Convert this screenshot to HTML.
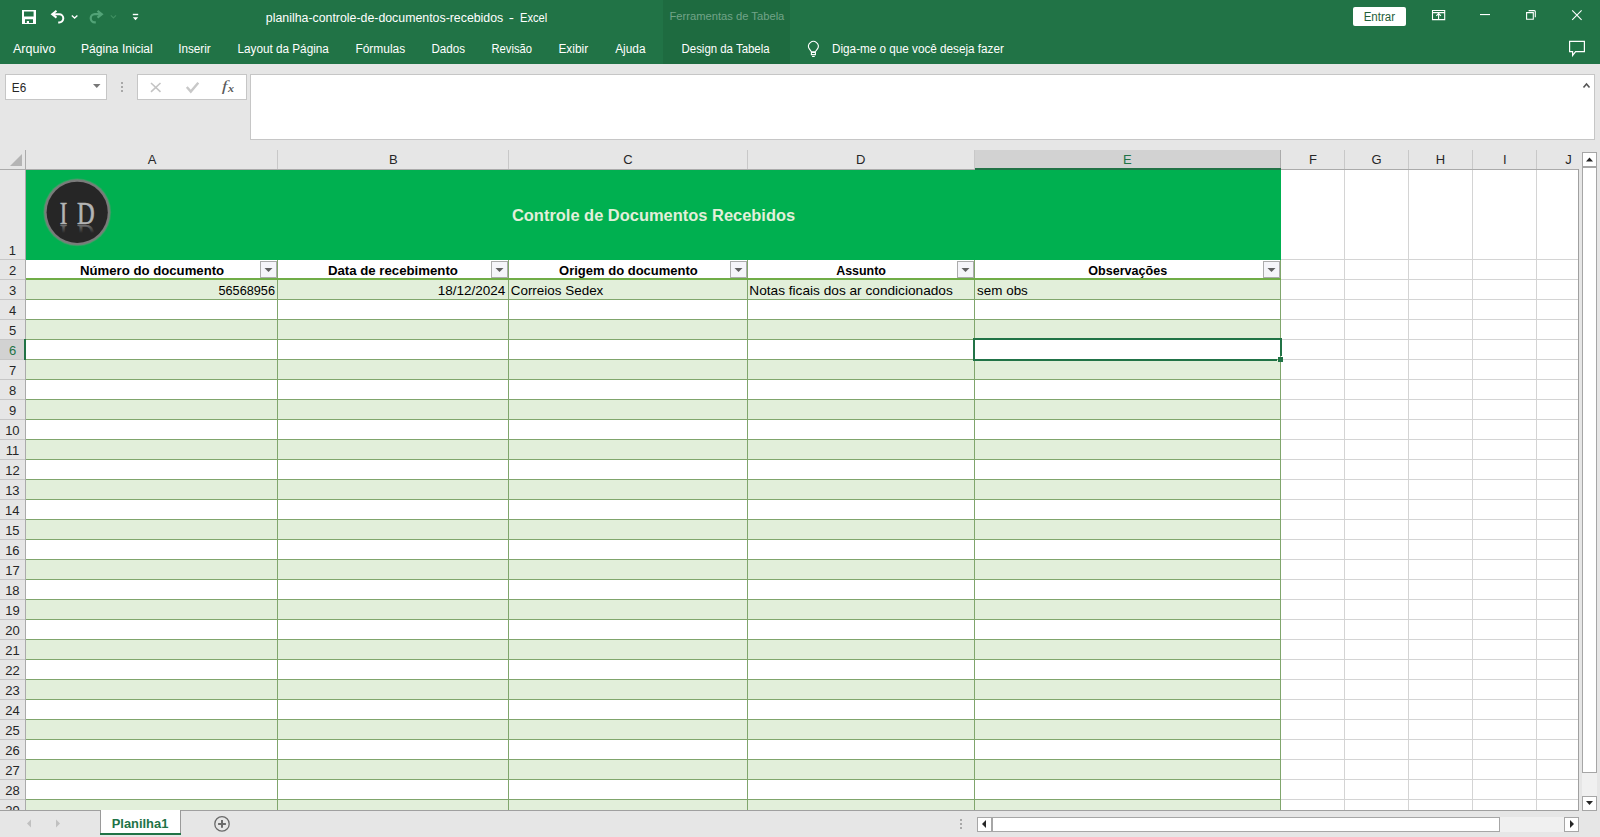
<!DOCTYPE html>
<html><head><meta charset="utf-8"><title>Excel</title>
<style>html,body{margin:0;padding:0;overflow:hidden;background:#fff}svg{display:block}text{font-family:"Liberation Sans",sans-serif;white-space:pre}</style>
</head><body>
<svg width="1600" height="837" viewBox="0 0 1600 837" shape-rendering="crispEdges">
<defs><clipPath id="cliprefl"><rect x="40" y="225" width="70" height="8"/></clipPath><linearGradient id="rfg" x1="0" y1="0" x2="0" y2="1"><stop offset="0" stop-color="#262626" stop-opacity="0.25"/><stop offset="1" stop-color="#262626" stop-opacity="1"/></linearGradient><clipPath id="clipgrid"><rect x="0" y="150" width="1600" height="660"/></clipPath></defs>
<rect x="0" y="0" width="1600" height="64" fill="#217346" />
<rect x="663" y="0" width="127" height="64" fill="#1e6b40" />
<rect x="1353" y="7" width="53" height="19" fill="#ffffff" rx="2" shape-rendering="auto"/>
<g shape-rendering="auto">
<path d="M22 10H36V24H22Z M24 11.4V16.4H33.6V11.4Z M25 19.2V22.9H26.8V21H29V22.9H33V19.2Z" fill="#fff" fill-rule="evenodd"/>
<path d="M56.5 10.8L52.2 14.2L56.5 17.6 M52.5 14.2H59.2A4.1 4.1 0 0 1 59.2 22.4H58.2" fill="none" stroke="#fff" stroke-width="2"/>
<path d="M71.8 15.4L74.6 18L77.4 15.4" fill="none" stroke="#fff" stroke-width="1.3"/>
<path d="M97.5 10.8L101.8 14.2L97.5 17.6 M101.5 14.2H94.8A4.1 4.1 0 0 0 94.8 22.4H95.8" fill="none" stroke="#52a377" stroke-width="2.2"/>
<path d="M110.8 15.4L113.4 18L116 15.4" fill="none" stroke="#3f8e60" stroke-width="1.2"/>
<rect x="132.8" y="13.8" width="5.4" height="1.4" fill="#fff"/><path d="M132.8 17.3H138.2L135.5 20.2Z" fill="#fff"/>
<path d="M1432.5 10.5H1444.7V19.6H1432.5Z M1432.5 12.6H1444.7 M1438.6 13.6V19.6 M1436.3 15.9L1438.6 13.6L1440.9 15.9" fill="none" stroke="#fff" stroke-width="1.1"/>
<rect x="1480" y="14" width="10" height="1.1" fill="#fff"/>
<path d="M1526.6 12.6H1533.3V19.3H1526.6Z M1528.6 10.6H1534.3Q1535.3 10.6 1535.3 11.6V17.3" fill="none" stroke="#fff" stroke-width="1.1"/>
<path d="M1572.2 10.4L1581.6 19.8M1581.6 10.4L1572.2 19.8" fill="none" stroke="#fff" stroke-width="1.1"/>
<path d="M811.5 51.8L809.2 48.7A4.85 4.85 0 1 1 817.6 48.7L815.3 51.8Z M811.4 52.4H815.4V54.6H811.4Z M812.1 56.5H814.7" fill="none" stroke="#fff" stroke-width="1.1"/>
<path d="M1569.6 41.4H1584.4V51.6H1575.6L1572.6 55.4V51.6H1569.6Z" fill="none" stroke="#fff" stroke-width="1.2" stroke-linejoin="miter"/>
</g>
<rect x="0" y="64" width="1600" height="86" fill="#e6e6e6" />
<rect x="5" y="74" width="102" height="26" fill="#ffffff" />
<rect x="5" y="74" width="102" height="1" fill="#c6c6c6" />
<rect x="5" y="99" width="102" height="1" fill="#c6c6c6" />
<rect x="5" y="74" width="1" height="26" fill="#c6c6c6" />
<rect x="106" y="74" width="1" height="26" fill="#c6c6c6" />
<path d="M93 84H100.5L96.75 88Z" fill="#777777" shape-rendering="auto"/>
<rect x="121" y="82" width="2" height="2" fill="#a8a8a8" />
<rect x="121" y="86.2" width="2" height="2" fill="#a8a8a8" />
<rect x="121" y="90.4" width="2" height="2" fill="#a8a8a8" />
<rect x="137" y="74" width="110" height="26" fill="#ffffff" />
<rect x="137" y="74" width="110" height="1" fill="#c6c6c6" />
<rect x="137" y="99" width="110" height="1" fill="#c6c6c6" />
<rect x="137" y="74" width="1" height="26" fill="#c6c6c6" />
<rect x="246" y="74" width="1" height="26" fill="#c6c6c6" />
<g shape-rendering="auto">
<path d="M151 83L160.5 91.8M160.5 83L151 91.8" stroke="#c4c4c4" stroke-width="1.6" fill="none"/>
<path d="M186.8 87L190.8 91.6L198.3 82.8" stroke="#c8c8c8" stroke-width="2.4" fill="none"/>
</g>
<rect x="250" y="74" width="1345" height="66" fill="#ffffff" />
<rect x="250" y="74" width="1345" height="1" fill="#c6c6c6" />
<rect x="250" y="139" width="1345" height="1" fill="#c6c6c6" />
<rect x="250" y="74" width="1" height="66" fill="#c6c6c6" />
<rect x="1594" y="74" width="1" height="66" fill="#c6c6c6" />
<path d="M1583.5 87.5L1586.5 84L1589.5 87.5" stroke="#555" stroke-width="1.6" fill="none" shape-rendering="auto"/>
<rect x="0" y="150" width="1579" height="20" fill="#e6e6e6" />
<rect x="0" y="170" width="25" height="640" fill="#e6e6e6" />
<rect x="26" y="170" width="1552" height="640" fill="#ffffff" />
<rect x="26" y="259" width="1553" height="1" fill="#d4d4d4" />
<rect x="26" y="279" width="1553" height="1" fill="#d4d4d4" />
<rect x="26" y="299" width="1553" height="1" fill="#d4d4d4" />
<rect x="26" y="319" width="1553" height="1" fill="#d4d4d4" />
<rect x="26" y="339" width="1553" height="1" fill="#d4d4d4" />
<rect x="26" y="359" width="1553" height="1" fill="#d4d4d4" />
<rect x="26" y="379" width="1553" height="1" fill="#d4d4d4" />
<rect x="26" y="399" width="1553" height="1" fill="#d4d4d4" />
<rect x="26" y="419" width="1553" height="1" fill="#d4d4d4" />
<rect x="26" y="439" width="1553" height="1" fill="#d4d4d4" />
<rect x="26" y="459" width="1553" height="1" fill="#d4d4d4" />
<rect x="26" y="479" width="1553" height="1" fill="#d4d4d4" />
<rect x="26" y="499" width="1553" height="1" fill="#d4d4d4" />
<rect x="26" y="519" width="1553" height="1" fill="#d4d4d4" />
<rect x="26" y="539" width="1553" height="1" fill="#d4d4d4" />
<rect x="26" y="559" width="1553" height="1" fill="#d4d4d4" />
<rect x="26" y="579" width="1553" height="1" fill="#d4d4d4" />
<rect x="26" y="599" width="1553" height="1" fill="#d4d4d4" />
<rect x="26" y="619" width="1553" height="1" fill="#d4d4d4" />
<rect x="26" y="639" width="1553" height="1" fill="#d4d4d4" />
<rect x="26" y="659" width="1553" height="1" fill="#d4d4d4" />
<rect x="26" y="679" width="1553" height="1" fill="#d4d4d4" />
<rect x="26" y="699" width="1553" height="1" fill="#d4d4d4" />
<rect x="26" y="719" width="1553" height="1" fill="#d4d4d4" />
<rect x="26" y="739" width="1553" height="1" fill="#d4d4d4" />
<rect x="26" y="759" width="1553" height="1" fill="#d4d4d4" />
<rect x="26" y="779" width="1553" height="1" fill="#d4d4d4" />
<rect x="26" y="799" width="1553" height="1" fill="#d4d4d4" />
<rect x="277" y="170" width="1" height="641" fill="#d4d4d4" />
<rect x="508" y="170" width="1" height="641" fill="#d4d4d4" />
<rect x="747" y="170" width="1" height="641" fill="#d4d4d4" />
<rect x="974" y="170" width="1" height="641" fill="#d4d4d4" />
<rect x="1280" y="170" width="1" height="641" fill="#d4d4d4" />
<rect x="1344" y="170" width="1" height="641" fill="#d4d4d4" />
<rect x="1408" y="170" width="1" height="641" fill="#d4d4d4" />
<rect x="1472" y="170" width="1" height="641" fill="#d4d4d4" />
<rect x="1536" y="170" width="1" height="641" fill="#d4d4d4" />
<rect x="1578" y="170" width="1" height="641" fill="#d4d4d4" />
<rect x="26" y="170" width="1255" height="90" fill="#00b050" />
<rect x="26" y="260" width="1255" height="19" fill="#ffffff" />
<rect x="26" y="280" width="1255" height="19" fill="#e2efda" />
<rect x="26" y="300" width="1255" height="19" fill="#ffffff" />
<rect x="26" y="320" width="1255" height="19" fill="#e2efda" />
<rect x="26" y="340" width="1255" height="19" fill="#ffffff" />
<rect x="26" y="360" width="1255" height="19" fill="#e2efda" />
<rect x="26" y="380" width="1255" height="19" fill="#ffffff" />
<rect x="26" y="400" width="1255" height="19" fill="#e2efda" />
<rect x="26" y="420" width="1255" height="19" fill="#ffffff" />
<rect x="26" y="440" width="1255" height="19" fill="#e2efda" />
<rect x="26" y="460" width="1255" height="19" fill="#ffffff" />
<rect x="26" y="480" width="1255" height="19" fill="#e2efda" />
<rect x="26" y="500" width="1255" height="19" fill="#ffffff" />
<rect x="26" y="520" width="1255" height="19" fill="#e2efda" />
<rect x="26" y="540" width="1255" height="19" fill="#ffffff" />
<rect x="26" y="560" width="1255" height="19" fill="#e2efda" />
<rect x="26" y="580" width="1255" height="19" fill="#ffffff" />
<rect x="26" y="600" width="1255" height="19" fill="#e2efda" />
<rect x="26" y="620" width="1255" height="19" fill="#ffffff" />
<rect x="26" y="640" width="1255" height="19" fill="#e2efda" />
<rect x="26" y="660" width="1255" height="19" fill="#ffffff" />
<rect x="26" y="680" width="1255" height="19" fill="#e2efda" />
<rect x="26" y="700" width="1255" height="19" fill="#ffffff" />
<rect x="26" y="720" width="1255" height="19" fill="#e2efda" />
<rect x="26" y="740" width="1255" height="19" fill="#ffffff" />
<rect x="26" y="760" width="1255" height="19" fill="#e2efda" />
<rect x="26" y="780" width="1255" height="19" fill="#ffffff" />
<rect x="26" y="800" width="1255" height="10" fill="#e2efda" />
<rect x="26" y="299" width="1255" height="1" fill="#80a66c" />
<rect x="26" y="319" width="1255" height="1" fill="#80a66c" />
<rect x="26" y="339" width="1255" height="1" fill="#80a66c" />
<rect x="26" y="359" width="1255" height="1" fill="#80a66c" />
<rect x="26" y="379" width="1255" height="1" fill="#80a66c" />
<rect x="26" y="399" width="1255" height="1" fill="#80a66c" />
<rect x="26" y="419" width="1255" height="1" fill="#80a66c" />
<rect x="26" y="439" width="1255" height="1" fill="#80a66c" />
<rect x="26" y="459" width="1255" height="1" fill="#80a66c" />
<rect x="26" y="479" width="1255" height="1" fill="#80a66c" />
<rect x="26" y="499" width="1255" height="1" fill="#80a66c" />
<rect x="26" y="519" width="1255" height="1" fill="#80a66c" />
<rect x="26" y="539" width="1255" height="1" fill="#80a66c" />
<rect x="26" y="559" width="1255" height="1" fill="#80a66c" />
<rect x="26" y="579" width="1255" height="1" fill="#80a66c" />
<rect x="26" y="599" width="1255" height="1" fill="#80a66c" />
<rect x="26" y="619" width="1255" height="1" fill="#80a66c" />
<rect x="26" y="639" width="1255" height="1" fill="#80a66c" />
<rect x="26" y="659" width="1255" height="1" fill="#80a66c" />
<rect x="26" y="679" width="1255" height="1" fill="#80a66c" />
<rect x="26" y="699" width="1255" height="1" fill="#80a66c" />
<rect x="26" y="719" width="1255" height="1" fill="#80a66c" />
<rect x="26" y="739" width="1255" height="1" fill="#80a66c" />
<rect x="26" y="759" width="1255" height="1" fill="#80a66c" />
<rect x="26" y="779" width="1255" height="1" fill="#80a66c" />
<rect x="26" y="799" width="1255" height="1" fill="#80a66c" />
<rect x="277" y="260" width="1" height="550" fill="#80a66c" />
<rect x="508" y="260" width="1" height="550" fill="#80a66c" />
<rect x="747" y="260" width="1" height="550" fill="#80a66c" />
<rect x="974" y="260" width="1" height="550" fill="#80a66c" />
<rect x="1280" y="260" width="1" height="550" fill="#80a66c" />
<rect x="26" y="278" width="1255" height="2" fill="#70ad47" />
<rect x="277" y="150" width="1" height="19" fill="#c8c8c8" />
<rect x="508" y="150" width="1" height="19" fill="#c8c8c8" />
<rect x="747" y="150" width="1" height="19" fill="#c8c8c8" />
<rect x="974" y="150" width="1" height="19" fill="#c8c8c8" />
<rect x="1280" y="150" width="1" height="19" fill="#c8c8c8" />
<rect x="1344" y="150" width="1" height="19" fill="#c8c8c8" />
<rect x="1408" y="150" width="1" height="19" fill="#c8c8c8" />
<rect x="1472" y="150" width="1" height="19" fill="#c8c8c8" />
<rect x="1536" y="150" width="1" height="19" fill="#c8c8c8" />
<rect x="975" y="150" width="305" height="18" fill="#d2d2d2" />
<rect x="1280" y="150" width="1" height="19" fill="#ababab" />
<rect x="975" y="168" width="306" height="2" fill="#217346" />
<rect x="0" y="169" width="975" height="1" fill="#ababab" />
<rect x="1281" y="169" width="298" height="1" fill="#ababab" />
<rect x="25" y="150" width="1" height="661" fill="#ababab" />
<path d="M10 166H22V154Z" fill="#b4b4b4" shape-rendering="auto"/>
<rect x="0" y="259" width="25" height="1" fill="#c6c6c6" />
<rect x="0" y="279" width="25" height="1" fill="#c6c6c6" />
<rect x="0" y="299" width="25" height="1" fill="#c6c6c6" />
<rect x="0" y="319" width="25" height="1" fill="#c6c6c6" />
<rect x="0" y="339" width="25" height="1" fill="#c6c6c6" />
<rect x="0" y="359" width="25" height="1" fill="#c6c6c6" />
<rect x="0" y="379" width="25" height="1" fill="#c6c6c6" />
<rect x="0" y="399" width="25" height="1" fill="#c6c6c6" />
<rect x="0" y="419" width="25" height="1" fill="#c6c6c6" />
<rect x="0" y="439" width="25" height="1" fill="#c6c6c6" />
<rect x="0" y="459" width="25" height="1" fill="#c6c6c6" />
<rect x="0" y="479" width="25" height="1" fill="#c6c6c6" />
<rect x="0" y="499" width="25" height="1" fill="#c6c6c6" />
<rect x="0" y="519" width="25" height="1" fill="#c6c6c6" />
<rect x="0" y="539" width="25" height="1" fill="#c6c6c6" />
<rect x="0" y="559" width="25" height="1" fill="#c6c6c6" />
<rect x="0" y="579" width="25" height="1" fill="#c6c6c6" />
<rect x="0" y="599" width="25" height="1" fill="#c6c6c6" />
<rect x="0" y="619" width="25" height="1" fill="#c6c6c6" />
<rect x="0" y="639" width="25" height="1" fill="#c6c6c6" />
<rect x="0" y="659" width="25" height="1" fill="#c6c6c6" />
<rect x="0" y="679" width="25" height="1" fill="#c6c6c6" />
<rect x="0" y="699" width="25" height="1" fill="#c6c6c6" />
<rect x="0" y="719" width="25" height="1" fill="#c6c6c6" />
<rect x="0" y="739" width="25" height="1" fill="#c6c6c6" />
<rect x="0" y="759" width="25" height="1" fill="#c6c6c6" />
<rect x="0" y="779" width="25" height="1" fill="#c6c6c6" />
<rect x="0" y="799" width="25" height="1" fill="#c6c6c6" />
<rect x="0" y="340" width="25" height="19" fill="#d2d2d2" />
<rect x="24" y="339" width="2" height="21" fill="#217346" />
<rect x="973" y="338" width="309" height="2" fill="#217346" />
<rect x="973" y="359" width="304" height="2" fill="#217346" />
<rect x="973" y="338" width="2" height="23" fill="#217346" />
<rect x="1280" y="338" width="2" height="18" fill="#217346" />
<rect x="1278" y="357" width="5" height="5" fill="#217346" />
<rect x="1277" y="356" width="1" height="1" fill="#ffffff" />
<rect x="0" y="810" width="1579" height="1" fill="#a0a0a0" />
<rect x="1578" y="169" width="1" height="642" fill="#a0a0a0" />
<rect x="260" y="261" width="17" height="17" fill="#f5f5f9" />
<rect x="260" y="261" width="17" height="1" fill="#acacac" />
<rect x="260" y="277" width="17" height="1" fill="#acacac" />
<rect x="260" y="261" width="1" height="17" fill="#acacac" />
<rect x="276" y="261" width="1" height="17" fill="#acacac" />
<path d="M264.5 268H272.5L268.5 272Z" fill="#606060" shape-rendering="auto"/>
<rect x="491" y="261" width="17" height="17" fill="#f5f5f9" />
<rect x="491" y="261" width="17" height="1" fill="#acacac" />
<rect x="491" y="277" width="17" height="1" fill="#acacac" />
<rect x="491" y="261" width="1" height="17" fill="#acacac" />
<rect x="507" y="261" width="1" height="17" fill="#acacac" />
<path d="M495.5 268H503.5L499.5 272Z" fill="#606060" shape-rendering="auto"/>
<rect x="730" y="261" width="17" height="17" fill="#f5f5f9" />
<rect x="730" y="261" width="17" height="1" fill="#acacac" />
<rect x="730" y="277" width="17" height="1" fill="#acacac" />
<rect x="730" y="261" width="1" height="17" fill="#acacac" />
<rect x="746" y="261" width="1" height="17" fill="#acacac" />
<path d="M734.5 268H742.5L738.5 272Z" fill="#606060" shape-rendering="auto"/>
<rect x="957" y="261" width="17" height="17" fill="#f5f5f9" />
<rect x="957" y="261" width="17" height="1" fill="#acacac" />
<rect x="957" y="277" width="17" height="1" fill="#acacac" />
<rect x="957" y="261" width="1" height="17" fill="#acacac" />
<rect x="973" y="261" width="1" height="17" fill="#acacac" />
<path d="M961.5 268H969.5L965.5 272Z" fill="#606060" shape-rendering="auto"/>
<rect x="1263" y="261" width="17" height="17" fill="#f5f5f9" />
<rect x="1263" y="261" width="17" height="1" fill="#acacac" />
<rect x="1263" y="277" width="17" height="1" fill="#acacac" />
<rect x="1263" y="261" width="1" height="17" fill="#acacac" />
<rect x="1279" y="261" width="1" height="17" fill="#acacac" />
<path d="M1267.5 268H1275.5L1271.5 272Z" fill="#606060" shape-rendering="auto"/>
<g shape-rendering="auto">
<circle cx="77.2" cy="212.3" r="34" fill="#5c9a70" opacity="0.45"/><circle cx="77.2" cy="212.3" r="33.2" fill="#6e8e78" opacity="0.7"/>
<circle cx="77.2" cy="212.3" r="32.6" fill="#7a7a7a"/>
<circle cx="77.2" cy="212.3" r="30.6" fill="#262626"/>
<defs><linearGradient id="rf" x1="0" y1="0" x2="0" y2="1"><stop offset="0" stop-color="#9a9a9a" stop-opacity="0.8"/><stop offset="1" stop-color="#262626" stop-opacity="0"/></linearGradient></defs>
</g>
<rect x="1579" y="150" width="21" height="661" fill="#e6e6e6" />
<rect x="1582" y="152" width="15" height="658" fill="#f0f0f0" />
<rect x="1582" y="152" width="15" height="15" fill="#ffffff" />
<rect x="1582" y="152" width="15" height="1" fill="#a6a6a6" />
<rect x="1582" y="166" width="15" height="1" fill="#a6a6a6" />
<rect x="1582" y="152" width="1" height="15" fill="#a6a6a6" />
<rect x="1596" y="152" width="1" height="15" fill="#a6a6a6" />
<path d="M1586 161.5H1593L1589.5 157.5Z" fill="#262626" shape-rendering="auto"/>
<rect x="1582" y="167" width="15" height="606" fill="#ffffff" />
<rect x="1582" y="167" width="15" height="1" fill="#a6a6a6" />
<rect x="1582" y="772" width="15" height="1" fill="#a6a6a6" />
<rect x="1582" y="167" width="1" height="606" fill="#a6a6a6" />
<rect x="1596" y="167" width="1" height="606" fill="#a6a6a6" />
<rect x="1582" y="796" width="15" height="15" fill="#ffffff" />
<rect x="1582" y="796" width="15" height="1" fill="#a6a6a6" />
<rect x="1582" y="810" width="15" height="1" fill="#a6a6a6" />
<rect x="1582" y="796" width="1" height="15" fill="#a6a6a6" />
<rect x="1596" y="796" width="1" height="15" fill="#a6a6a6" />
<path d="M1586 801H1593L1589.5 805Z" fill="#262626" shape-rendering="auto"/>
<rect x="0" y="811" width="1600" height="26" fill="#e6e6e6" />
<rect x="101" y="810" width="79" height="23" fill="#ffffff" />
<rect x="100" y="810" width="1" height="25" fill="#9a9a9a" />
<rect x="180" y="810" width="1" height="25" fill="#9a9a9a" />
<rect x="100" y="833" width="81" height="2" fill="#217346" />
<path d="M31 819.5V827.5L27 823.5Z" fill="#c0c0c0" shape-rendering="auto"/>
<path d="M56 819.5V827.5L60 823.5Z" fill="#c0c0c0" shape-rendering="auto"/>
<g shape-rendering="auto"><circle cx="222" cy="823.9" r="7.2" fill="none" stroke="#6a6a6a" stroke-width="1.3"/><path d="M218.1 823.9H225.9M222 820V827.8" stroke="#6a6a6a" stroke-width="2"/></g>
<rect x="960" y="819" width="2" height="2" fill="#a8a8a8" />
<rect x="960" y="823" width="2" height="2" fill="#a8a8a8" />
<rect x="960" y="827" width="2" height="2" fill="#a8a8a8" />
<rect x="977" y="817" width="602" height="15" fill="#f0f0f0" />
<rect x="977" y="817" width="15" height="15" fill="#ffffff" />
<rect x="977" y="817" width="15" height="1" fill="#a6a6a6" />
<rect x="977" y="831" width="15" height="1" fill="#a6a6a6" />
<rect x="977" y="817" width="1" height="15" fill="#a6a6a6" />
<rect x="991" y="817" width="1" height="15" fill="#a6a6a6" />
<path d="M986 820V828L982 824Z" fill="#262626" shape-rendering="auto"/>
<rect x="992" y="817" width="508" height="15" fill="#ffffff" />
<rect x="992" y="817" width="508" height="1" fill="#a6a6a6" />
<rect x="992" y="831" width="508" height="1" fill="#a6a6a6" />
<rect x="992" y="817" width="1" height="15" fill="#a6a6a6" />
<rect x="1499" y="817" width="1" height="15" fill="#a6a6a6" />
<rect x="1564" y="817" width="15" height="15" fill="#ffffff" />
<rect x="1564" y="817" width="15" height="1" fill="#a6a6a6" />
<rect x="1564" y="831" width="15" height="1" fill="#a6a6a6" />
<rect x="1564" y="817" width="1" height="15" fill="#a6a6a6" />
<rect x="1578" y="817" width="1" height="15" fill="#a6a6a6" />
<path d="M1570 820V828L1574 824Z" fill="#262626" shape-rendering="auto"/>
<g shape-rendering="auto">
<text x="265.86" y="22" font-size="12.5" fill="#ffffff" textLength="237.41" lengthAdjust="spacingAndGlyphs">planilha-controle-de-documentos-recebidos</text>
<text x="508.78" y="22" font-size="12.5" fill="#ffffff" textLength="5.19" lengthAdjust="spacingAndGlyphs">-</text>
<text x="520.01" y="22" font-size="12.5" fill="#ffffff" textLength="27.18" lengthAdjust="spacingAndGlyphs">Excel</text>
<text x="669.51" y="19.6" font-size="11.2" fill="#72a488">Ferramentas de Tabela</text>
<text x="1363.68" y="21" font-size="12.5" fill="#1f6039" textLength="31.37" lengthAdjust="spacingAndGlyphs">Entrar</text>
<text x="13.00" y="53" font-size="12.5" fill="#ffffff">Arquivo</text>
<text x="81.04" y="53" font-size="12.5" fill="#ffffff" textLength="71.71" lengthAdjust="spacingAndGlyphs">Página Inicial</text>
<text x="178.25" y="53" font-size="12.5" fill="#ffffff" textLength="32.51" lengthAdjust="spacingAndGlyphs">Inserir</text>
<text x="237.46" y="53" font-size="12.5" fill="#ffffff" textLength="91.39" lengthAdjust="spacingAndGlyphs">Layout da Página</text>
<text x="355.45" y="53" font-size="12.5" fill="#ffffff" textLength="49.71" lengthAdjust="spacingAndGlyphs">Fórmulas</text>
<text x="431.47" y="53" font-size="12.5" fill="#ffffff" textLength="33.58" lengthAdjust="spacingAndGlyphs">Dados</text>
<text x="491.50" y="53" font-size="12.5" fill="#ffffff" textLength="40.50" lengthAdjust="spacingAndGlyphs">Revisão</text>
<text x="558.45" y="53" font-size="12.5" fill="#ffffff" textLength="29.70" lengthAdjust="spacingAndGlyphs">Exibir</text>
<text x="615.20" y="53" font-size="12.5" fill="#ffffff" textLength="30.35" lengthAdjust="spacingAndGlyphs">Ajuda</text>
<text x="681.59" y="53" font-size="12.5" fill="#ffffff" textLength="87.97" lengthAdjust="spacingAndGlyphs">Design da Tabela</text>
<text x="832.06" y="53" font-size="12.5" fill="#ffffff" textLength="171.84" lengthAdjust="spacingAndGlyphs">Diga-me o que você deseja fazer</text>
<text x="11.86" y="92" font-size="12.5" fill="#262626" textLength="14.36" lengthAdjust="spacingAndGlyphs">E6</text>
<text x="221.79" y="91" font-size="14" font-style="italic" style="font-family:Liberation Serif" fill="#5a5a5a" textLength="5.70" lengthAdjust="spacingAndGlyphs">f</text>
<text x="228.04" y="91.5" font-size="10.5" font-weight="bold" font-style="italic" style="font-family:Liberation Serif" fill="#5a5a5a" textLength="6.00" lengthAdjust="spacingAndGlyphs">x</text>
<text x="147.65" y="164" font-size="13" fill="#262626">A</text>
<text x="388.95" y="164" font-size="13" fill="#262626">B</text>
<text x="623.19" y="164" font-size="13" fill="#262626">C</text>
<text x="856.06" y="164" font-size="13" fill="#262626">D</text>
<text x="1122.88" y="164" font-size="13" fill="#217346">E</text>
<text x="1308.91" y="164" font-size="13" fill="#262626">F</text>
<text x="1371.56" y="164" font-size="13" fill="#262626">G</text>
<text x="1435.86" y="164" font-size="13" fill="#262626">H</text>
<text x="1502.98" y="164" font-size="13" fill="#262626">I</text>
<text x="1565.34" y="164" font-size="13" fill="#262626">J</text>
<text x="8.83" y="255" font-size="13" fill="#262626">1</text>
<text x="8.96" y="275" font-size="13" fill="#262626">2</text>
<text x="9.03" y="295" font-size="13" fill="#262626">3</text>
<text x="9.02" y="315" font-size="13" fill="#262626">4</text>
<text x="8.96" y="335" font-size="13" fill="#262626">5</text>
<text x="8.89" y="355" font-size="13" fill="#217346">6</text>
<text x="8.96" y="375" font-size="13" fill="#262626">7</text>
<text x="8.96" y="395" font-size="13" fill="#262626">8</text>
<text x="9.02" y="415" font-size="13" fill="#262626">9</text>
<text x="5.15" y="435" font-size="13" fill="#262626">10</text>
<text x="5.70" y="455" font-size="13" fill="#262626">11</text>
<text x="5.22" y="475" font-size="13" fill="#262626">12</text>
<text x="5.15" y="495" font-size="13" fill="#262626">13</text>
<text x="5.09" y="515" font-size="13" fill="#262626">14</text>
<text x="5.15" y="535" font-size="13" fill="#262626">15</text>
<text x="5.15" y="555" font-size="13" fill="#262626">16</text>
<text x="5.22" y="575" font-size="13" fill="#262626">17</text>
<text x="5.15" y="595" font-size="13" fill="#262626">18</text>
<text x="5.22" y="615" font-size="13" fill="#262626">19</text>
<text x="5.28" y="635" font-size="13" fill="#262626">20</text>
<text x="5.35" y="655" font-size="13" fill="#262626">21</text>
<text x="5.35" y="675" font-size="13" fill="#262626">22</text>
<text x="5.28" y="695" font-size="13" fill="#262626">23</text>
<text x="5.22" y="715" font-size="13" fill="#262626">24</text>
<text x="5.28" y="735" font-size="13" fill="#262626">25</text>
<text x="5.28" y="755" font-size="13" fill="#262626">26</text>
<text x="5.35" y="775" font-size="13" fill="#262626">27</text>
<text x="5.28" y="795" font-size="13" fill="#262626">28</text>
<g clip-path="url(#clipgrid)"><text x="5.35" y="815" font-size="13" fill="#262626">29</text></g>
<text x="80.01" y="275" font-size="13" font-weight="bold" fill="#000" textLength="144.15" lengthAdjust="spacingAndGlyphs">Número do documento</text>
<text x="327.96" y="275" font-size="13" font-weight="bold" fill="#000" textLength="129.95" lengthAdjust="spacingAndGlyphs">Data de recebimento</text>
<text x="559.08" y="275" font-size="13" font-weight="bold" fill="#000">Origem do documento</text>
<text x="836.15" y="275" font-size="13" font-weight="bold" fill="#000" textLength="49.83" lengthAdjust="spacingAndGlyphs">Assunto</text>
<text x="1088.25" y="275" font-size="13" font-weight="bold" fill="#000" textLength="78.96" lengthAdjust="spacingAndGlyphs">Observações</text>
<text x="218.49" y="295" font-size="13" fill="#000" textLength="56.47" lengthAdjust="spacingAndGlyphs">56568956</text>
<text x="437.75" y="295" font-size="13" fill="#000" textLength="67.60" lengthAdjust="spacingAndGlyphs">18/12/2024</text>
<text x="510.73" y="295" font-size="13" fill="#000" textLength="92.61" lengthAdjust="spacingAndGlyphs">Correios Sedex</text>
<text x="749.31" y="295" font-size="13" fill="#000" textLength="203.50" lengthAdjust="spacingAndGlyphs">Notas ficais dos ar condicionados</text>
<text x="977.13" y="295" font-size="13" fill="#000" textLength="50.67" lengthAdjust="spacingAndGlyphs">sem obs</text>
<text x="511.94" y="220.5" font-size="17.4" font-weight="bold" fill="#e2efda" textLength="283.25" lengthAdjust="spacingAndGlyphs">Controle de Documentos Recebidos</text>
<text x="59.82" y="224.3" font-size="31" style="font-family:Liberation Serif" stroke="#b4b4b4" stroke-width="0.6" fill="#b4b4b4" textLength="7.52" lengthAdjust="spacingAndGlyphs">I</text>
<text x="77.01" y="224.3" font-size="31" style="font-family:Liberation Serif" stroke="#b4b4b4" stroke-width="0.6" fill="#b4b4b4" textLength="17.68" lengthAdjust="spacingAndGlyphs">D</text>
<g clip-path="url(#cliprefl)"><g transform="translate(0,449.6) scale(1,-1)"><text x="59.82" y="224.3" font-size="31" style="font-family:Liberation Serif" stroke="#8a8a8a" stroke-width="0.6" fill="#8a8a8a" textLength="7.52" lengthAdjust="spacingAndGlyphs">I</text></g></g>
<g clip-path="url(#cliprefl)"><g transform="translate(0,449.6) scale(1,-1)"><text x="77.01" y="224.3" font-size="31" style="font-family:Liberation Serif" stroke="#8a8a8a" stroke-width="0.6" fill="#8a8a8a" textLength="17.68" lengthAdjust="spacingAndGlyphs">D</text></g></g>
<text x="111.73" y="827.8" font-size="12.5" font-weight="bold" fill="#217346" textLength="56.61" lengthAdjust="spacingAndGlyphs">Planilha1</text>
<rect x="55" y="225" width="45" height="8" fill="url(#rfg)"/>
</g>
</svg>
</body></html>
